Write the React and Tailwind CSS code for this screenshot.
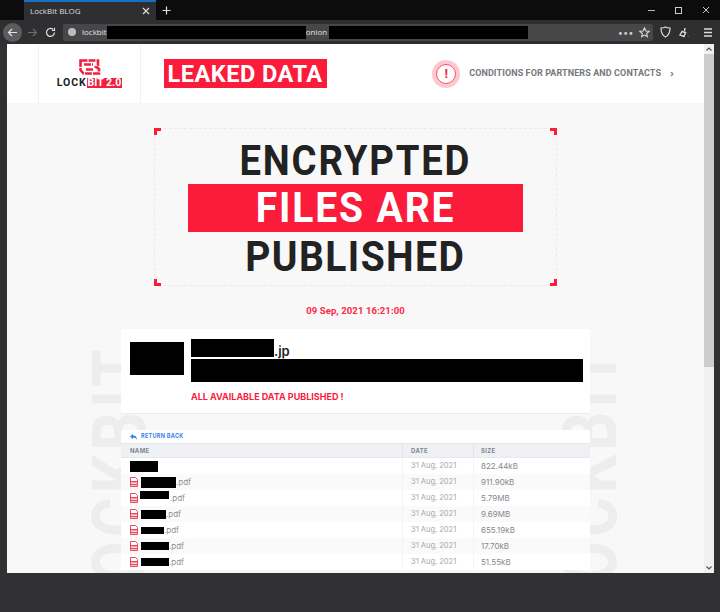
import React from "react";

const din = { fontFamily: '"Roboto","Liberation Sans",sans-serif' };
const rows = [
  { w: 28, ext: "", date: "31 Aug, 2021", size: "822.44kB", icon: false, h: 11, dy: 0 },
  { w: 35, ext: ".pdf", date: "31 Aug, 2021", size: "911.90kB", icon: true, h: 11, dy: 0 },
  { w: 29, ext: ".pdf", date: "31 Aug, 2021", size: "5.79MB", icon: true, h: 8, dy: -3, ox: -1 },
  { w: 25, ext: ".pdf", date: "31 Aug, 2021", size: "9.69MB", icon: true, h: 9, dy: 0 },
  { w: 23, ext: ".pdf", date: "31 Aug, 2021", size: "655.19kB", icon: true, h: 7, dy: 0 },
  { w: 28, ext: ".pdf", date: "31 Aug, 2021", size: "17.70kB", icon: true, h: 8, dy: 0 },
  { w: 28, ext: ".pdf", date: "31 Aug, 2021", size: "51.55kB", icon: true, h: 8, dy: 0 },
];

function PdfIcon() {
  return (
    <svg width="8" height="10" viewBox="0 0 8 10" className="shrink-0">
      <path d="M0.5 0.5H5.5L7.5 2.5V9.5H0.5Z" fill="#fff" stroke="#e8485c" strokeWidth="1" />
      <rect x="1" y="4" width="6" height="1.5" fill="#e8485c" />
      <rect x="1" y="6.8" width="6" height="1.5" fill="#e8485c" />
    </svg>
  );
}

function Corner({ className }) {
  return <span className={`absolute w-[7px] h-[7px] border-[#fb1c3c] ${className}`} />;
}

function Watermark({ className }) {
  return (
    <div
      className={`absolute origin-top-left rotate-[-90deg] scale-x-[0.8] text-[76px] leading-none font-bold text-[#ededed] tracking-[5px] whitespace-nowrap select-none ${className}`}
      style={din}
    >
      LOCKBIT
    </div>
  );
}

export default function App() {
  return (
    <div className="w-[720px] h-[612px] overflow-hidden bg-[#313133] flex flex-col" style={{ fontFamily: '"Inter",sans-serif' }}>
      {/* tab strip */}
      <div className="h-[20px] bg-[#0c0c0d] flex items-stretch shrink-0">
        <div className="w-[24px]" />
        <div className="w-[132px] bg-[#2f2f32] border-t-2 border-[#1a6fc4] flex items-center pl-[6px] pr-[6px] justify-between">
          <span className="text-[8px] text-[#dcdcde]" style={{ fontFamily: '"Open Sans",sans-serif' }}>LockBit BLOG</span>
          <svg width="8" height="8" viewBox="0 0 8 8" stroke="#ddd" strokeWidth="1.2"><path d="M1 1L7 7M7 1L1 7" /></svg>
        </div>
        <div className="w-[20px] flex items-center justify-center">
          <svg width="9" height="9" viewBox="0 0 9 9" stroke="#ddd" strokeWidth="1.2"><path d="M4.5 0.5V8.5M0.5 4.5H8.5" /></svg>
        </div>
        <div className="flex-1" />
        <div className="flex items-center gap-[20px] pr-[10px]">
          <svg width="7" height="7" viewBox="0 0 7 7" stroke="#bbb"><path d="M0 3.5H7" /></svg>
          <svg width="7" height="7" viewBox="0 0 7 7" stroke="#ccc" fill="none"><rect x="0.5" y="0.5" width="6" height="6" /></svg>
          <svg width="8" height="8" viewBox="0 0 8 8" stroke="#ccc"><path d="M1 1L7 7M7 1L1 7" /></svg>
        </div>
      </div>
      {/* toolbar */}
      <div className="h-[24px] bg-[#2f2f32] flex items-center shrink-0 pl-[3px] pr-[6px]">
        <div className="w-[19px] h-[19px] rounded-full bg-[#5c5c5f] flex items-center justify-center">
          <svg width="11" height="11" viewBox="0 0 11 11" stroke="#e4e4e4" strokeWidth="1.2" fill="none"><path d="M10 5.5H1.5M5 2L1.5 5.5L5 9" /></svg>
        </div>
        <div className="w-[20px] flex justify-center">
          <svg width="11" height="11" viewBox="0 0 11 11" stroke="#6e6e70" strokeWidth="1.2" fill="none"><path d="M1 5.5H9.5M6 2L9.5 5.5L6 9" /></svg>
        </div>
        <svg className="ml-[3px]" width="11" height="11" viewBox="0 0 11 11" stroke="#ddd" strokeWidth="1.2" fill="none"><path d="M9.5 5.5A4 4 0 1 1 8 2.3M9.5 0.8V3.3H7" /></svg>
        <div className="ml-[7px] w-[590px] h-[17px] bg-[#47474a] rounded-[2px] flex items-center pl-[5px]">
          <span className="w-[8px] h-[8px] rounded-full bg-[#bdbdbd]" />
          <span className="ml-[6px] text-[8px] text-[#e2e2e2]" style={{ fontFamily: '"Open Sans",sans-serif' }}>lockbit</span>
          <span className="w-[199px] h-[13px] bg-black" />
          <span className="text-[8px] text-[#e2e2e2] w-[22px]" style={{ fontFamily: '"Open Sans",sans-serif' }}>onion</span>
          <span className="w-[199px] h-[13px] bg-black ml-[1px]" />
          <span className="flex-1" />
          <span className="text-[#d0d0d0] text-[9px] leading-none tracking-[1px] font-bold">•••</span>
          <svg className="ml-[5px] mr-[3px]" width="11" height="11" viewBox="0 0 24 24" stroke="#ddd" strokeWidth="2.4" fill="none"><path d="M12 2l3 6.6 7 .8-5.2 4.8 1.4 7L12 17.6 5.8 21.2l1.4-7L2 9.4l7-.8z" /></svg>
        </div>
        <svg className="ml-[7px]" width="11" height="12" viewBox="0 0 11 12" stroke="#ddd" strokeWidth="1.2" fill="none"><path d="M1 2C3.5 2 4.5 1.6 5.5 1C6.5 1.6 7.5 2 10 2C10 7 8.5 9.5 5.5 11C2.5 9.5 1 7 1 2Z" /></svg>
        <svg className="ml-[8px]" width="11" height="11" viewBox="0 0 11 11" stroke="#ddd" strokeWidth="1.4" fill="none"><path d="M6 1L5.5 4M3 4.5L6.5 5.5L5 9.5L1 8ZM8 6.5V6.7M9.5 9V9.2" /></svg>
        <svg className="ml-[13px]" width="10" height="9" viewBox="0 0 10 9" stroke="#ddd" strokeWidth="1.3"><path d="M1 1H9M1 4.5H9M1 8H9" /></svg>
      </div>
      {/* viewport */}
      <div className="mx-[7px] w-[707px] h-[529px] flex overflow-hidden shrink-0">
        <div className="relative flex-1 bg-[#f8f8f8] overflow-hidden flex flex-col items-center">
          <Watermark className="left-[75px] top-[574px]" />
          <Watermark className="left-[545px] top-[574px]" />
          {/* header */}
          <header className="relative w-full h-[59px] bg-white shrink-0 flex items-center">
            <div className="ml-[31px] w-[103px] h-full border-x border-[#f1f1f1] flex flex-col items-center justify-center">
              <svg width="22" height="16" viewBox="0 0 22 16" fill="none" stroke="#f0213f" strokeWidth="2.6" strokeDasharray="7 1"><path d="M1.5 1.5H19V6L17 8L20 10V14.5H4.5L1.5 11ZM5 5.5H14M7 10.5H15" /></svg>
              <div className="flex items-center text-[10.5px] font-bold leading-none mt-[3px] tracking-[0.9px] text-[#222]" style={din}>
                LOCK<span className="bg-[#f0213f] text-white px-[1px] tracking-normal">BIT 2.0</span>
              </div>
            </div>
            <div className="ml-[23px] w-[163px] h-[29px] bg-[#fb1c3c] flex items-center justify-center text-white text-[24px] font-bold tracking-[0.5px] leading-none whitespace-nowrap" style={din}>
              <span className="scale-x-[0.98]">LEAKED DATA</span>
            </div>
            <div className="flex-1" />
            <div className="w-[28px] h-[28px] rounded-full bg-[#fdc9d1] flex items-center justify-center">
              <div className="w-[20px] h-[20px] rounded-full bg-white border border-[#fb5068] flex items-center justify-center text-[#fb1c3c] text-[13px] font-bold leading-none" style={din}>!</div>
            </div>
            <span className="ml-[9px] text-[9px] font-bold tracking-[0.1px] text-[#77777c] whitespace-nowrap" style={din}>CONDITIONS FOR PARTNERS AND CONTACTS</span>
            <span className="ml-[9px] mr-[30px] text-[9px] font-bold text-[#77777c]">›</span>
          </header>
          {/* hero */}
          <div className="relative mt-[25px] w-[403px] h-[158px] shrink-0 border border-dashed border-[#f9e3e6] flex flex-col items-center" style={din}>
            <Corner className="-left-px -top-px border-l-[3px] border-t-[3px]" />
            <Corner className="-right-px -top-px border-r-[3px] border-t-[3px]" />
            <Corner className="-left-px -bottom-px border-l-[3px] border-b-[3px]" />
            <Corner className="-right-px -bottom-px border-r-[3px] border-b-[3px]" />
            <div className="mt-[8px] text-[42px] leading-[47px] font-bold tracking-[2px] text-[#222] scale-x-[0.91]">ENCRYPTED</div>
            <div className="w-[335px] h-[48px] bg-[#fb1c3c] text-white text-[42px] leading-[48px] font-bold tracking-[2px] text-center"><div className="scale-x-[0.93]">FILES ARE</div></div>
            <div className="text-[42px] leading-[50px] font-bold tracking-[1.5px] text-[#222] scale-x-[0.93]">PUBLISHED</div>
          </div>
          <div className="relative mt-[18px] text-[9.5px] font-bold text-[#fb2a3f] tracking-[0.1px] leading-[14px] shrink-0" style={din}>09 Sep, 2021 16:21:00</div>
          {/* card */}
          <div className="relative mt-[11px] w-[469px] h-[85px] bg-white rounded-[2px] border-b border-[#ececec] shrink-0 flex pt-[9px] pl-[9px]">
            <div className="w-[54px] h-[33px] mt-[4px] bg-black" />
            <div className="ml-[7px] flex-1 pr-[7px]">
              <div className="flex items-end h-[19px] text-[13px] font-semibold text-[#222] leading-none">
                <span className="w-[83px] h-[18px] bg-black" />
                <span className="relative top-[1px]">.jp</span>
              </div>
              <div className="h-[23px] mt-[2px] bg-black" />
              <div className="mt-[9px] text-[9px] font-bold text-[#fb1c3c] leading-[12px]">ALL AVAILABLE DATA PUBLISHED !</div>
            </div>
          </div>
          {/* table */}
          <div className="relative mt-[16px] w-[469px] bg-white shrink-0 rounded-t-[2px]">
            <div className="h-[13px] flex items-center pl-[9px]">
              <svg width="7" height="6" viewBox="0 0 7 6" fill="#2f7fe6"><path d="M0 2.5L3 0V1.6C5.5 1.6 7 3 7 6C6 4.3 5 3.6 3 3.6V5Z" /></svg>
              <span className="ml-[4px] text-[5.5px] font-bold tracking-[0.3px] text-[#3b82e6]">RETURN BACK</span>
            </div>
            <div className="h-[15px] bg-[#eef0f4] border-y border-[#e6e8ec] flex items-center text-[6px] font-bold tracking-[0.3px] text-[#7f8695]">
              <div className="w-[281px] pl-[9px]">NAME</div>
              <div className="w-[71px] pl-[8px] h-full flex items-center border-l border-[#e2e4e8]">DATE</div>
              <div className="flex-1 pl-[7px] h-full flex items-center border-l border-[#e2e4e8]">SIZE</div>
            </div>
            {rows.map((r, i) => (
              <div key={i} className={`h-[16px] flex items-center text-[8px] text-[#8b8f99] ${i % 2 === 1 ? "bg-[#fafafa]" : "bg-white"}`}>
                <div className="w-[281px] pl-[9px] flex items-center">
                  {r.icon && <PdfIcon />}
                  <span className={`bg-black ${r.icon ? "ml-[3px]" : ""}`} style={{ width: r.w, height: r.h, transform: `translate(${r.ox || 0}px, ${r.dy}px)` }} />
                  <span>{r.ext}</span>
                </div>
                <div className="w-[71px] pl-[8px] h-full flex items-center border-l border-[#f4f4f4] text-[#a3a6ac] text-[7.5px]">{r.date}</div>
                <div className="flex-1 pl-[7px] h-full flex items-center border-l border-[#f4f4f4] text-[#85888f]">{r.size}</div>
              </div>
            ))}
          </div>
        </div>
        {/* scrollbar */}
        <div className="w-[10px] bg-[#f0f0f0] flex flex-col items-center shrink-0">
          <div className="h-[10px] flex items-center justify-center">
            <svg width="6" height="4" viewBox="0 0 6 4" stroke="#555" strokeWidth="1.2" fill="none"><path d="M0.5 3.5L3 1L5.5 3.5" /></svg>
          </div>
          <div className="w-full h-[313px] bg-[#cdcdcd]" />
          <div className="flex-1" />
          <div className="h-[10px] flex items-center justify-center">
            <svg width="6" height="4" viewBox="0 0 6 4" stroke="#555" strokeWidth="1.2" fill="none"><path d="M0.5 0.5L3 3L5.5 0.5" /></svg>
          </div>
        </div>
      </div>
    </div>
  );
}
